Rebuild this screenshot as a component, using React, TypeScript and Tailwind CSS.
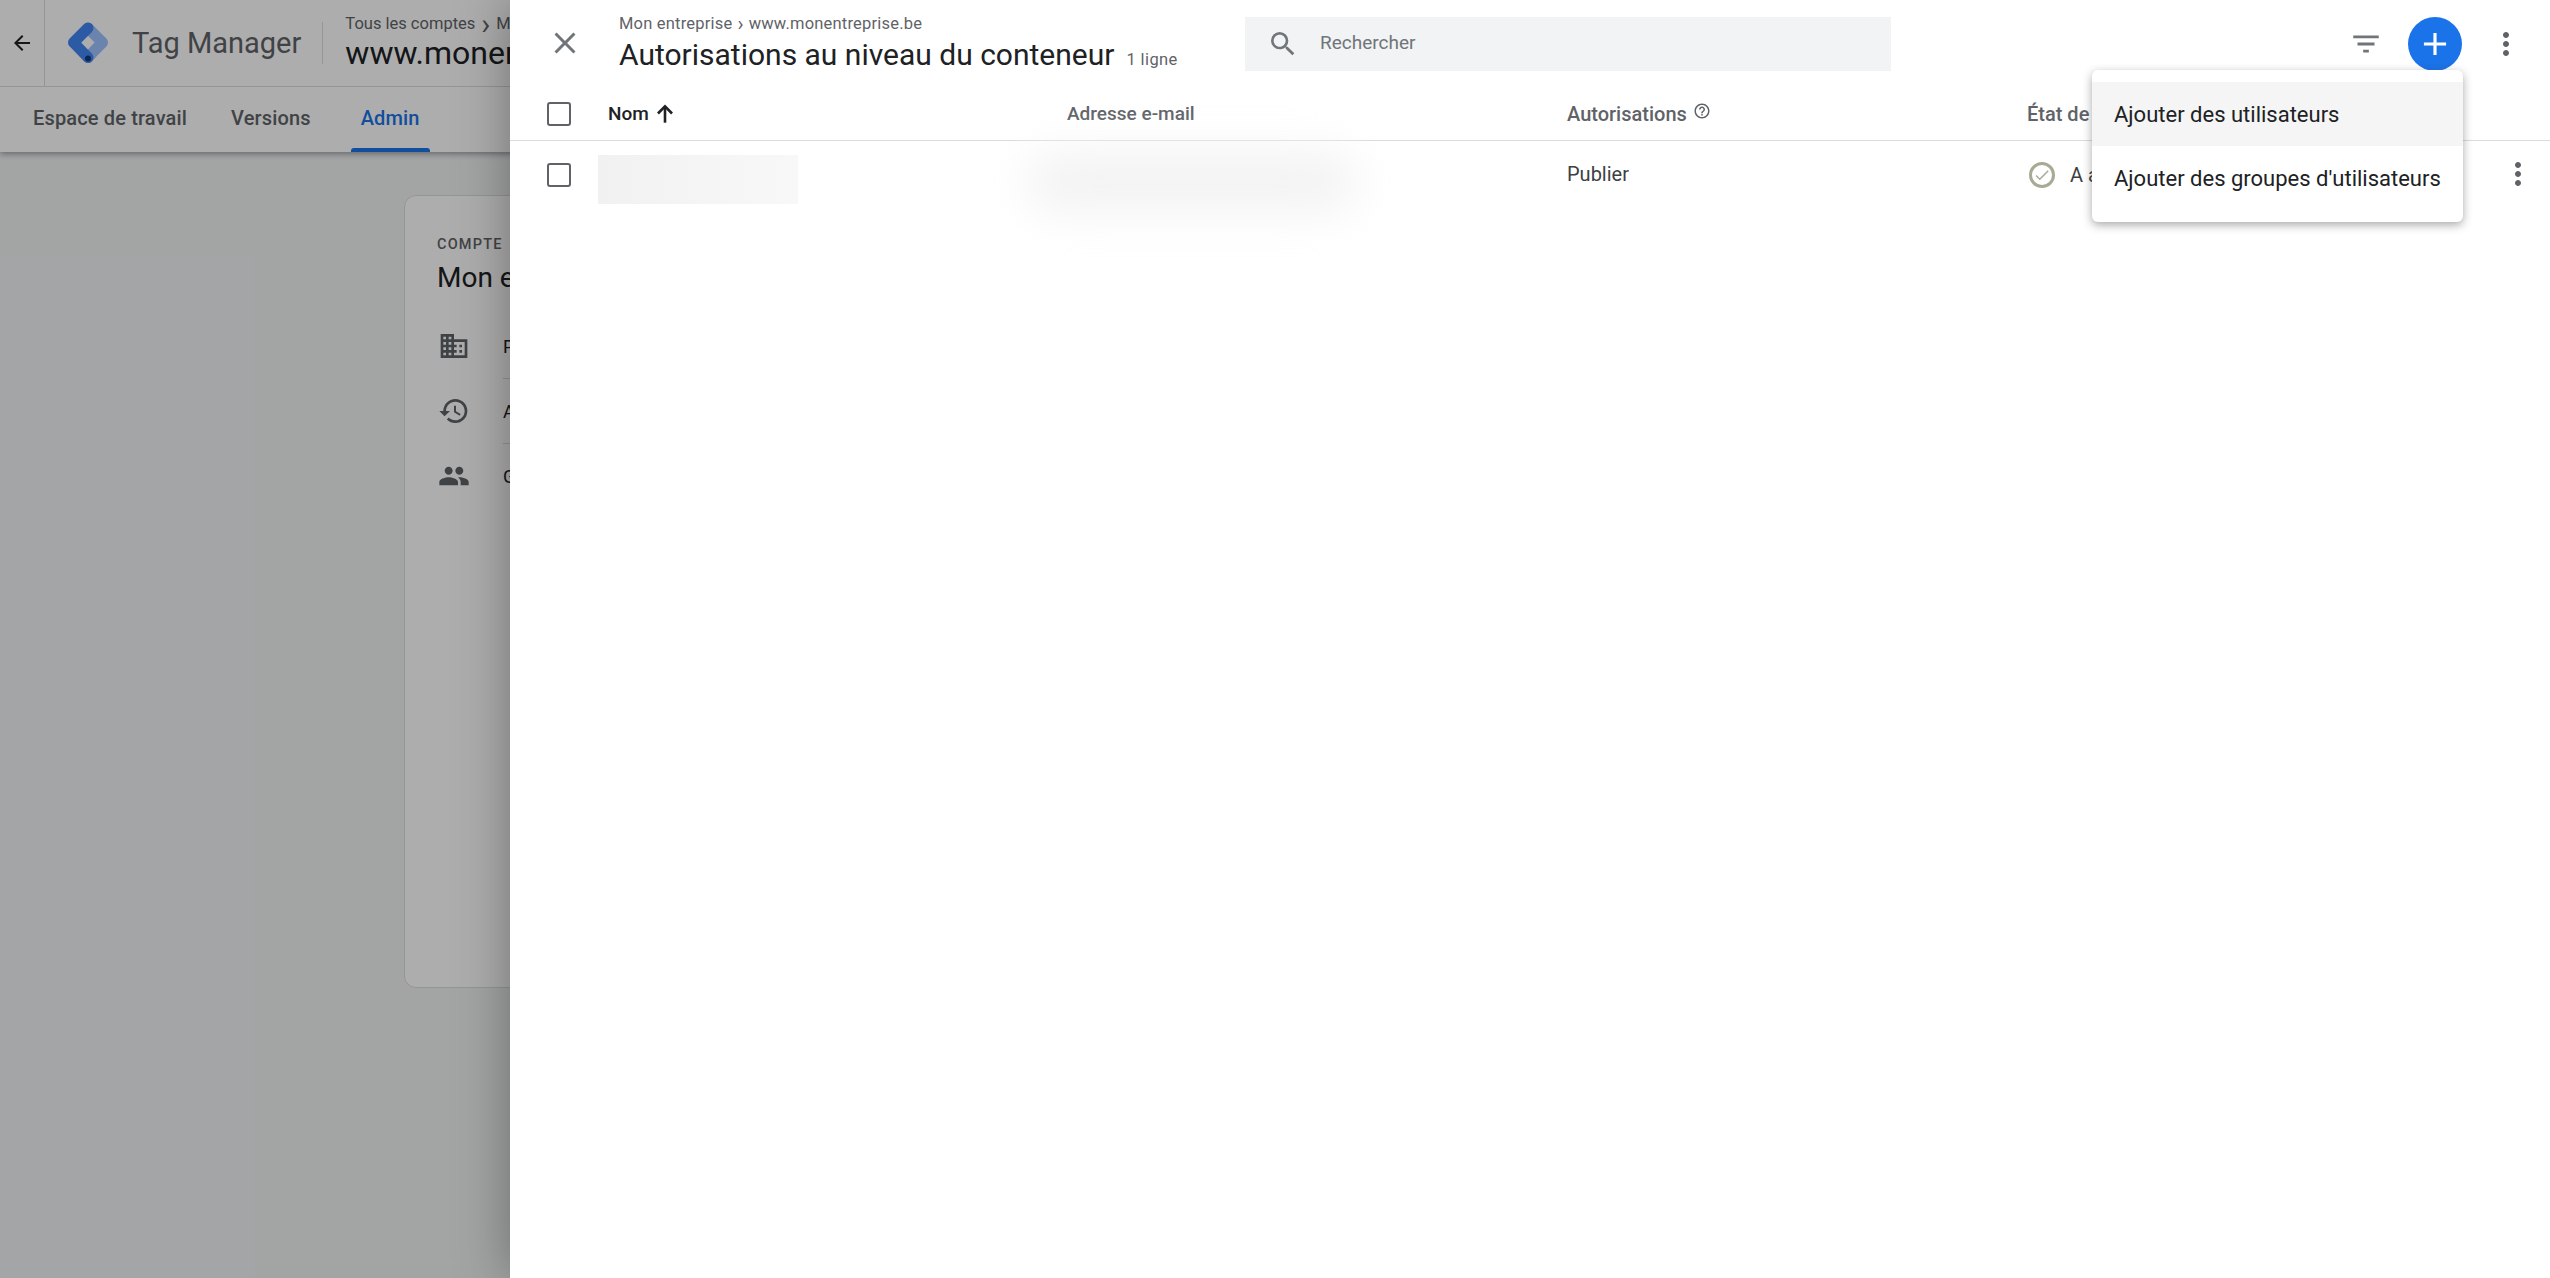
import { MdArrowBack, MdClose, MdSearch, MdFilterList, MdAdd, MdMoreVert, MdHelpOutline, MdBusiness, MdHistory, MdPeople, MdCheck } from "react-icons/md";

function Logo() {
  return (
    <svg width="40" height="42" viewBox="0 0 40 41" className="shrink-0" fill="none" strokeWidth="11" strokeLinejoin="round" strokeLinecap="round">
      <path d="M20 5.5 L34.5 20 L27 27.5 L20 35" stroke="#9dc3ff" />
      <path d="M20 5.5 L5.5 20 L20 35" stroke="#4285f4" />
      <circle cx="20" cy="36" r="3" fill="#123a7a" stroke="none" />
    </svg>
  );
}

function Checkbox() {
  return <div className="w-[24px] h-[24px] rounded-[3px] border-[2px] border-[#5f6368] bg-white" />;
}

function CardRow({ icon, label, line }: { icon: React.ReactNode; label: string; line?: boolean }) {
  return (
    <div className="flex items-center h-[65px] text-[#202124] text-[18px]">
      <div className="w-[66px] flex items-center pl-[1px] pb-[2px] text-[#5f6368]">{icon}</div>
      <div className={"flex-1 h-full flex items-center " + (line ? "border-b border-[#dadce0]" : "")}>{label}</div>
    </div>
  );
}

const gridCols = "grid grid-cols-[61px_459px_500px_460px_1fr] pl-[37px] items-center";

export default function App() {
  return (
    <div className="relative w-full h-[1278px] overflow-hidden bg-[#f1f3f4] font-['Roboto',sans-serif]">
      {/* Page underneath */}
      <header className="bg-white shadow-[0_2px_6px_rgba(60,64,67,0.5)]">
        <div className="flex items-center h-[87px] border-b border-[#dadce0]">
          <div className="w-[45px] h-full flex items-center pl-[10px] border-r border-[#dadce0]">
            <MdArrowBack size={24} color="#202124" />
          </div>
          <div className="pl-[23px]"><Logo /></div>
          <div className="pl-[24px] pr-[21px] text-[29px] text-[#5f6368] leading-none">Tag Manager</div>
          <div className="w-px h-[42px] bg-[#dadce0]" />
          <div className="pl-[22px]">
            <div className="text-[16.5px] text-[#5f6368] leading-[20px] flex items-center whitespace-nowrap">Tous les comptes<span className="text-[30px] leading-[20px] mx-[6px]">›</span>Mon entreprise</div>
            <div className="text-[32px] text-[#202124] leading-[38px] whitespace-nowrap">www.monentreprise.be</div>
          </div>
        </div>
        <nav className="flex h-[65px] text-[20px] font-medium tracking-[0.15px] text-[#5f6368]">
          <div className="pl-[33px] pr-[44px] flex items-center pb-[3px]">Espace de travail</div>
          <div className="pr-[40px] flex items-center pb-[3px]">Versions</div>
          <div className="relative px-[10px] flex items-center pb-[3px] text-[#1a73e8]">
            Admin
            <div className="absolute left-0 right-0 bottom-0 h-[4px] rounded-t-[3px] bg-[#1a73e8]" />
          </div>
        </nav>
      </header>
      <main className="pl-[404px] pt-[43px]">
        <section className="w-[760px] h-[793px] rounded-[12px] bg-white border border-[#dadce0] pl-[32px] pt-[39px]">
          <div className="text-[14.5px] font-medium tracking-[1.2px] leading-[20px] text-[#5f6368]">COMPTE</div>
          <div className="text-[28px] leading-[36px] text-[#202124] mt-[5px]">Mon entreprise</div>
          <div className="mt-[18px]">
            <CardRow icon={<MdBusiness size={32} />} label="Paramètres du compte" line />
            <CardRow icon={<MdHistory size={32} />} label="Activité du compte" line />
            <CardRow icon={<MdPeople size={32} />} label="Gestion des utilisateurs" />
          </div>
        </section>
      </main>

      {/* Scrim */}
      <div className="absolute inset-0 bg-black/[0.32]" />

      {/* Side panel */}
      <aside className="absolute top-0 bottom-0 left-[510px] right-0 bg-white shadow-[0_0_50px_rgba(0,0,0,0.35)]">
        <div className="flex items-center h-[87px]">
          <div className="w-[109px] pl-[37px] pb-[1px] flex items-center text-[#70757a]"><MdClose size={36} /></div>
          <div className="w-[626px]">
            <div className="text-[16.5px] leading-[20px] text-[#5f6368] tracking-[0.2px] whitespace-nowrap flex items-center">Mon entreprise<span className="text-[20px] leading-[20px] mx-[5px]">›</span>www.monentreprise.be</div>
            <div className="flex items-baseline whitespace-nowrap mt-[3px]">
              <span className="text-[30px] leading-[36px] text-[#202124]">Autorisations au niveau du conteneur</span>
              <span className="text-[16.5px] text-[#5f6368] ml-[12px] tracking-[0.4px]">1 ligne</span>
            </div>
          </div>
          <div className="w-[646px] h-[54px] bg-[#f1f3f4] flex items-center pl-[22px] text-[#70757a]">
            <MdSearch size={32} />
            <span className="ml-[21px] text-[19px]">Rechercher</span>
          </div>
          <div className="flex-1 flex items-center justify-end">
            <MdFilterList size={34} color="#70757a" />
            <div className="ml-[25px] w-[54px] h-[54px] rounded-full bg-[#1a73e8] flex items-center justify-center text-white"><MdAdd size={38} /></div>
            <div className="ml-[34px] mr-[34px] text-[#5f6368]"><MdMoreVert size={36} className="-mx-[8px]" /></div>
          </div>
        </div>
        <div className={gridCols + " h-[54px] border-b border-[#dadce0] text-[#5f6368] font-medium"}>
          <Checkbox />
          <div className="flex items-center text-[19px] text-[#202124] pt-[1px]">
            Nom
            <svg width="26" height="26" viewBox="0 0 24 24" fill="none" stroke="currentColor" strokeWidth="2.4" className="ml-[3px]">
              <path d="M12 20V5" />
              <path d="M5.5 11.5 12 5l6.5 6.5" />
            </svg>
          </div>
          <div className="text-[19px] pt-[1px]">Adresse e-mail</div>
          <div className="flex items-center text-[20px]">Autorisations<MdHelpOutline size={18} className="ml-[6px] -mt-[6px]" /></div>
          <div className="text-[20px] whitespace-nowrap">État de l'invitation</div>
        </div>
        <div className={gridCols + " h-[67px] text-[20px] text-[#3c4043] relative"}>
          <Checkbox />
          <div className="relative h-full">
            <div className="absolute left-[-10px] top-[14px] w-[200px] h-[49px] bg-gradient-to-r from-[#f1f1f1] to-[#f8f8f8]" />
          </div>
          <div className="relative h-full">
            <div className="absolute left-[-40px] top-[10px] w-[330px] h-[62px] rounded-[30px] bg-[#f3f3f3] blur-[22px]" />
          </div>
          <div className="pb-[1px]">Publier</div>
          <div className="flex items-center">
            <div className="w-[26px] h-[26px] rounded-full border-[3px] border-[#a8ab94] flex items-center justify-center text-[#a8ab94] ml-[2px]"><MdCheck size={18} /></div>
            <span className="ml-[15px]">A accepté</span>
          </div>
          <div className="absolute left-[1990px] top-[15px] text-[#5f6368]"><MdMoreVert size={36} /></div>
        </div>
      </aside>

      {/* Add menu */}
      <div className="absolute left-[2092px] top-[70px] w-[371px] h-[152px] bg-white rounded-[6px] py-[12px] shadow-[0_3px_10px_rgba(60,64,67,0.45)] text-[22px] text-[#202124]">
        <div className="h-[64px] flex items-center pl-[22px] bg-[#f5f5f5]">Ajouter des utilisateurs</div>
        <div className="h-[64px] flex items-center pl-[22px]">Ajouter des groupes d'utilisateurs</div>
      </div>
    </div>
  );
}
